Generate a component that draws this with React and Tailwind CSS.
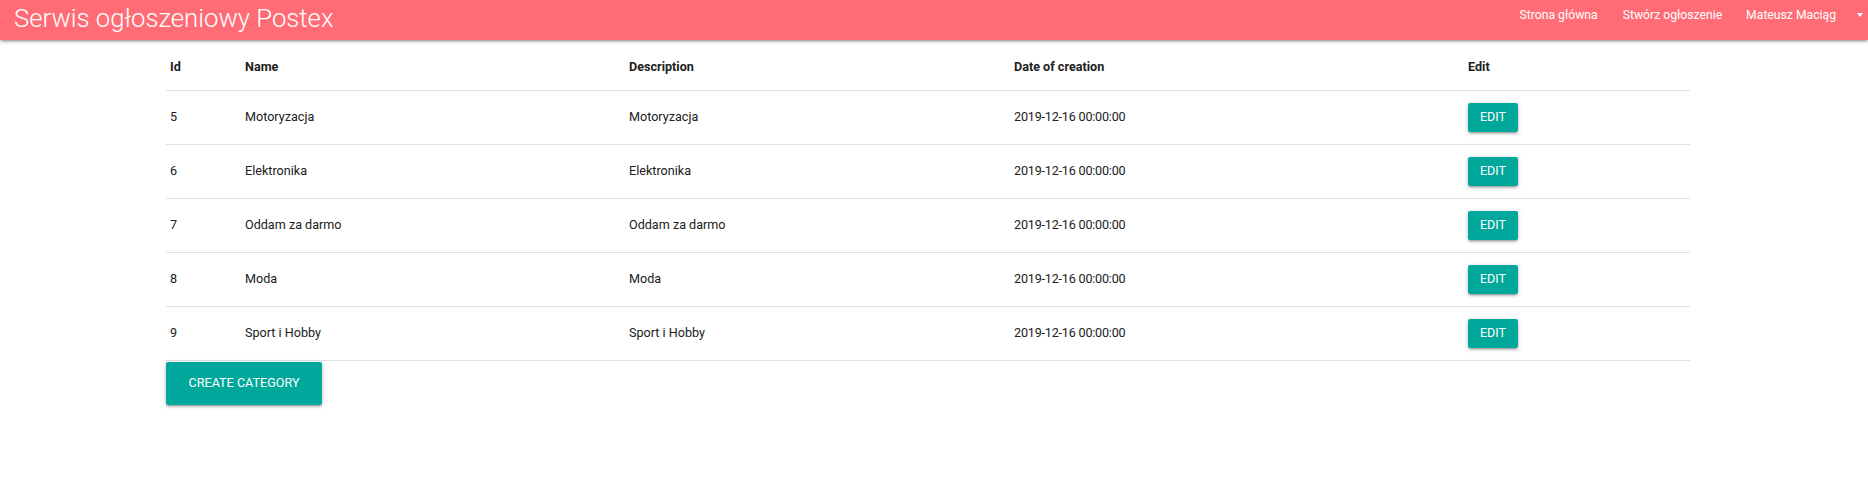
import React from "react";

const rows = [
  { id: 5, name: "Motoryzacja", desc: "Motoryzacja" },
  { id: 6, name: "Elektronika", desc: "Elektronika" },
  { id: 7, name: "Oddam za darmo", desc: "Oddam za darmo" },
  { id: 8, name: "Moda", desc: "Moda" },
  { id: 9, name: "Sport i Hobby", desc: "Sport i Hobby" },
];

const shadow =
  "shadow-[0_2px_2px_0_rgba(0,0,0,0.14),0_3px_1px_-2px_rgba(0,0,0,0.12),0_1px_5px_0_rgba(0,0,0,0.2)]";

export default function App() {
  return (
    <div className="min-h-[503px] bg-white font-['Roboto','Noto_Sans',sans-serif] text-[#212121]">
      <nav className="relative z-10 flex h-10 items-start justify-between bg-[#ff6c76] text-white shadow-[0_2px_2px_0_rgba(0,0,0,0.14),0_3px_1px_-2px_rgba(0,0,0,0.12),0_1px_5px_0_rgba(0,0,0,0.2)]">
        <span className="pl-[14px] pt-[1px] text-[25.7px] font-light leading-[34px]">
          Serwis ogłoszeniowy Postex
        </span>
        <div className="flex items-center pt-[5px] text-[12.2px] leading-[20px]">
          <a className="mr-[25px]">Strona główna</a>
          <a className="mr-[24px]">Stwórz ogłoszenie</a>
          <a className="mr-[21px]">Mateusz Maciąg</a>
          <span className="mr-[5px] h-0 w-0 border-x-[3.5px] border-t-[4px] border-x-transparent border-t-white" />
        </div>
      </nav>

      <div className="ml-[166px] w-[1524px] pt-[6px]">
        <table className="w-full border-collapse text-left text-[12.6px]">
          <thead>
            <tr className="h-[44px] border-b border-[#e0e0e0]">
              <th className="w-[74px] px-[4px] font-bold">Id</th>
              <th className="w-[384px] px-[5px] font-bold">Name</th>
              <th className="w-[385px] px-[5px] font-bold">Description</th>
              <th className="w-[454px] px-[5px] font-bold">Date of creation</th>
              <th className="px-[5px] font-bold">Edit</th>
            </tr>
          </thead>
          <tbody>
            {rows.map((r) => (
              <tr key={r.id} className="h-[54px] border-b border-[#e0e0e0]">
                <td className="px-[4px]">{r.id}</td>
                <td className="px-[5px]">{r.name}</td>
                <td className="px-[5px]">{r.desc}</td>
                <td className="px-[5px] tracking-[-0.2px]">2019-12-16 00:00:00</td>
                <td className="px-[5px]">
                  <button className={`flex h-[29px] w-[50px] items-center justify-center rounded-[2px] bg-[#00a79b] text-[12.5px] text-white ${shadow}`}>
                    EDIT
                  </button>
                </td>
              </tr>
            ))}
          </tbody>
        </table>
        <button className={`mt-[1px] flex h-[43px] w-[156px] items-center justify-center rounded-[2px] bg-[#00a79b] text-[12.6px] text-white ${shadow}`}>
          CREATE CATEGORY
        </button>
      </div>
    </div>
  );
}
